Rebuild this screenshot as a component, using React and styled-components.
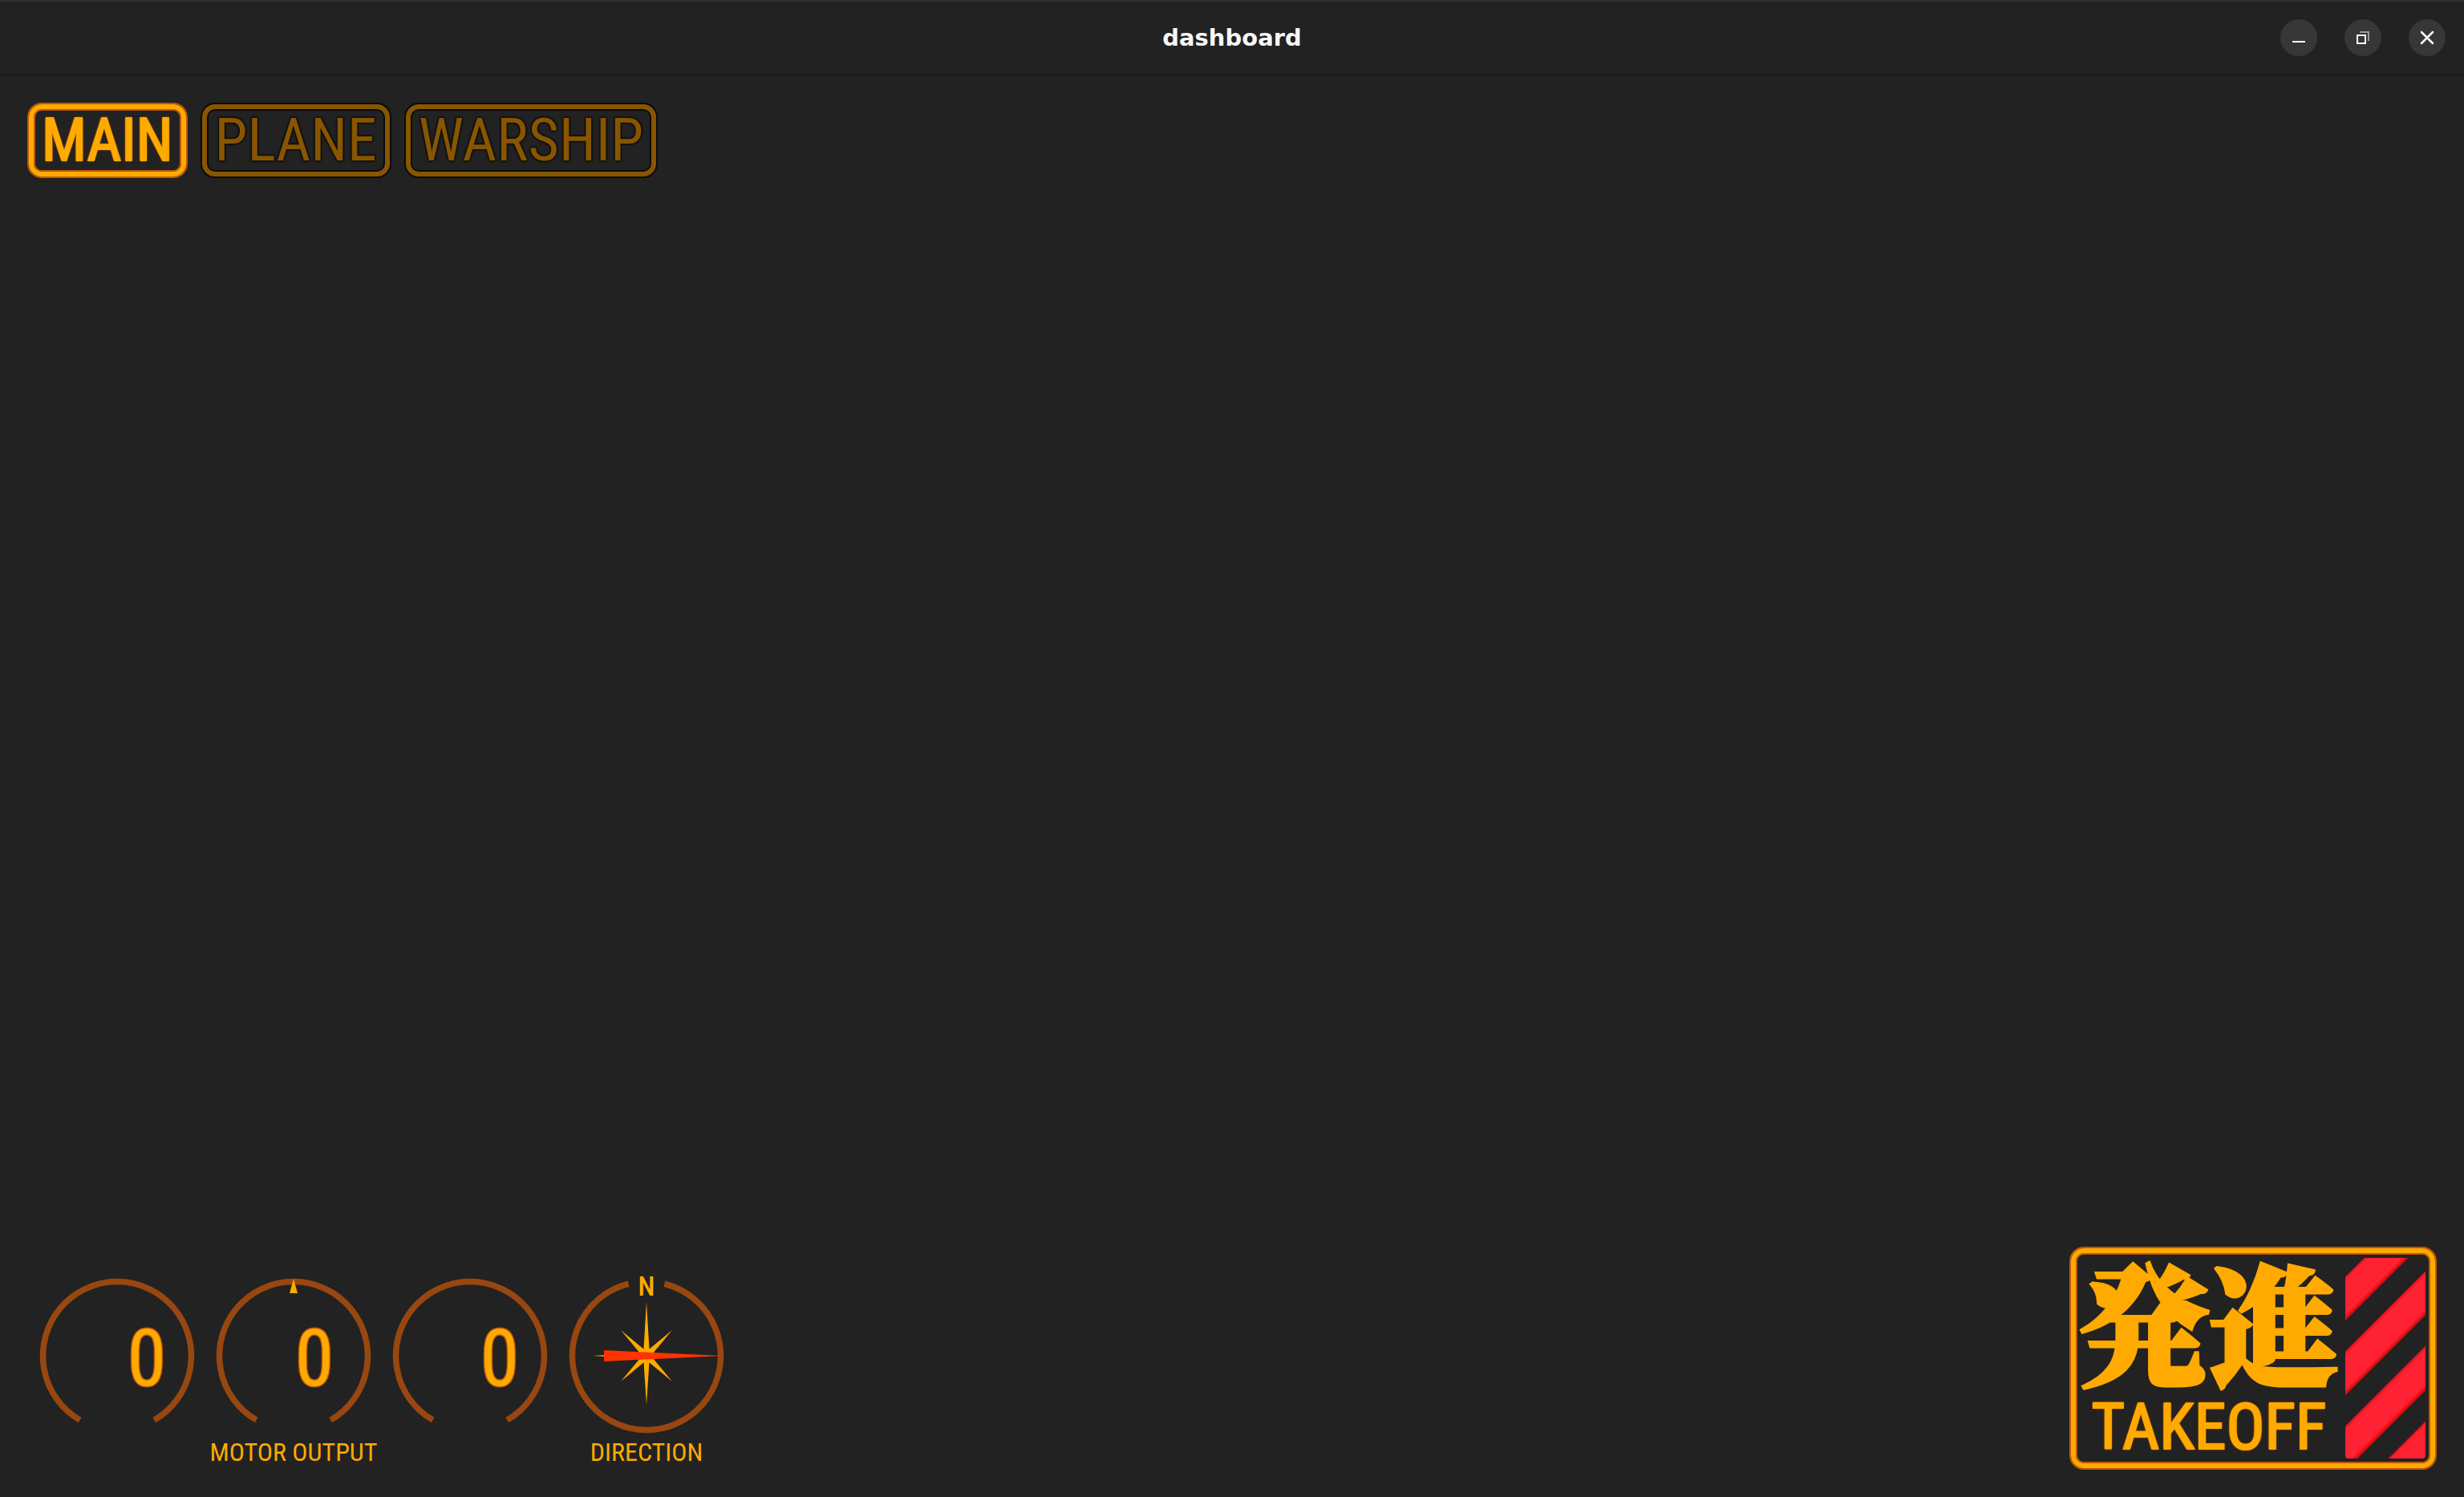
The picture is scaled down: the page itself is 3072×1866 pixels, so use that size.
import React, { useState } from 'react';
import styled, { createGlobalStyle, css } from 'styled-components';

const amber = '#ffaa00';
const glow = '#bf560b';
const ring = '#984710';

const GlobalStyle = createGlobalStyle`
  * { box-sizing: border-box; }
  html, body { margin: 0; background: #222222; }
  body { font-family: "Roboto Condensed", "Roboto", "Noto Sans CJK JP", sans-serif; }
  button { margin: 0; padding: 0; border: 0; background: none; font: inherit; cursor: pointer; }
`;

const Window = styled.div`
  display: flex;
  flex-direction: column;
  min-height: 100vh;
  background: #222222;
`;

const TitleBar = styled.header`
  display: grid;
  grid-template-columns: 1fr auto 1fr;
  align-items: center;
  height: 94px;
  padding: 0 23px;
  border-top: 2px solid #303030;
  border-bottom: 2px solid #191919;
`;

const Title = styled.h1`
  grid-column: 2;
  margin: 0;
  color: #f7f7f7;
  font: bold 29px/40px "DejaVu Sans", sans-serif;
`;

const WindowControls = styled.div`
  display: flex;
  justify-content: flex-end;
  gap: 34px;
`;

const ControlButton = styled.button`
  width: 46px;
  height: 46px;
  border-radius: 50%;
  background: #373737;
  svg { display: block; }
`;

const Body = styled.main`
  display: flex;
  flex: 1;
  flex-direction: column;
  justify-content: space-between;
  padding: 36px;
`;

const Tabs = styled.nav`
  display: flex;
  gap: 20px;
`;

const outlined = css`
  border: 6px solid ${(p) => p.$color};
  border-radius: 16px;
  box-shadow: 0 0 0 2px ${(p) => p.$edge}, inset 0 0 0 2px ${(p) => p.$edge};
  color: ${(p) => p.$color};
  text-shadow: 0 0 2px ${(p) => p.$edge}, 0 0 2px ${(p) => p.$edge},
    0 0 3px ${(p) => p.$edge}, 0 0 3px ${(p) => p.$edge};
`;

const Tab = styled.button`
  && {
    ${outlined}
    height: 90px;
    padding: 0 10px;
    font-size: 74px;
    line-height: 78px;
    -webkit-text-stroke: ${(p) => (p.$active ? '2px' : '0')} ${(p) => p.$color};
  }
`;

const Footer = styled.footer`
  display: flex;
  align-items: flex-end;
  justify-content: space-between;
`;

const Instruments = styled.div`
  display: flex;
  gap: 20px;
  padding-left: 10px;
`;

const Instrument = styled.figure`
  margin: 0;
`;

const Dials = styled.div`
  display: flex;
  gap: 20px;
`;

const Dial = styled.svg`
  display: block;
  width: 200px;
  height: 200px;
  overflow: visible;
`;

const Caption = styled.figcaption`
  color: ${amber};
  font-size: 32px;
  line-height: 40px;
  text-align: center;
`;

const Reading = styled.text`
  fill: ${amber};
  font-size: 98px;
  font-weight: 400;
  text-anchor: middle;
  paint-order: stroke;
  stroke: ${glow};
  stroke-width: 3px;
`;

const North = styled.text`
  fill: ${amber};
  font-size: 34px;
  font-weight: 500;
  text-anchor: middle;
`;

const LaunchButton = styled.button`
  && {
    ${outlined}
    display: flex;
    gap: 4px;
    width: 454px;
    padding: 6px 6px 6px 0;
  }
`;

const LaunchText = styled.span`
  display: flex;
  flex: 1;
  flex-direction: column;
  align-items: center;
`;

const Kanji = styled.span`
  font-family: "Noto Serif CJK JP", "Noto Sans CJK JP", sans-serif;
  font-size: 162px;
  font-weight: 900;
  line-height: 154px;
  -webkit-text-stroke: 5px ${amber};
`;

const Latin = styled.span`
  margin-top: 18px;
  font-size: 80px;
  line-height: 78px;
  -webkit-text-stroke: 2px ${amber};
`;

const Hazard = styled.span`
  width: 100px;
  border-radius: 0 0 4px 4px;
  background: repeating-linear-gradient(
    -45deg,
    #ff2233 0 29px,
    #dd1018 33px,
    transparent 33px 60px,
    #cc0505 60px,
    #ff2233 66px
  );
`;

function point(radius, degrees) {
  const a = (degrees * Math.PI) / 180;
  return `${100 + radius * Math.sin(a)} ${100 - radius * Math.cos(a)}`;
}

function Arc({ from, to }) {
  return (
    <path
      d={`M${point(92.5, from)} A92.5 92.5 0 1 1 ${point(92.5, to)}`}
      fill="none"
      stroke={ring}
      strokeWidth="7.5"
    />
  );
}

function MotorDial({ value, x, marker }) {
  return (
    <Dial viewBox="0 0 200 200">
      <Arc from={-150} to={150} />
      {marker && <path d="M100 4 L105 22 H95 Z" fill={amber} />}
      <Reading x={x} y="137">{value}</Reading>
    </Dial>
  );
}

function Compass() {
  return (
    <Dial viewBox="0 0 200 200">
      <Arc from={14} to={346} />
      <North x="100" y="25">N</North>
      <g fill={amber}>
        <path d="M100 33 L104 100 L100 161 L96 100 Z" />
        <path d="M33 100 L100 96 L161 100 L100 104 Z" />
        <path d="M68 68 L103 97 L132 132 L97 103 Z" />
        <path d="M132 68 L103 103 L68 132 L97 97 Z" />
      </g>
      <path d="M47 93 L196 100 L47 107 Z" fill="#ff3300" />
    </Dial>
  );
}

const pages = ['MAIN', 'PLANE', 'WARSHIP'];

export default function App() {
  const [page, setPage] = useState('MAIN');
  return (
    <>
      <GlobalStyle />
      <Window>
        <TitleBar>
          <Title>dashboard</Title>
          <WindowControls>
            <ControlButton aria-label="Minimize">
              <svg width="46" height="46">
                <path d="M15 28 H31" stroke="#fff" strokeWidth="2" />
              </svg>
            </ControlButton>
            <ControlButton aria-label="Restore">
              <svg width="46" height="46" fill="none" strokeWidth="2">
                <path d="M19 16 H30 V27" stroke="#9b9b9b" />
                <rect x="16" y="20" width="10" height="10" stroke="#fff" />
              </svg>
            </ControlButton>
            <ControlButton aria-label="Close">
              <svg width="46" height="46">
                <path d="M16 16 L30 30 M30 16 L16 30" stroke="#fff" strokeWidth="2.5" strokeLinecap="round" />
              </svg>
            </ControlButton>
          </WindowControls>
        </TitleBar>
        <Body>
          <Tabs>
            {pages.map((name) => (
              <Tab
                key={name}
                $active={name === page}
                $color={name === page ? amber : '#885500'}
                $edge={name === page ? glow : '#0b0b0b'}
                aria-pressed={name === page}
                onClick={() => setPage(name)}
              >
                {name}
              </Tab>
            ))}
          </Tabs>
          <Footer>
            <Instruments>
              <Instrument>
                <Dials>
                  <MotorDial value={0} x={137} />
                  <MotorDial value={0} x={126} marker />
                  <MotorDial value={0} x={137} />
                </Dials>
                <Caption>MOTOR OUTPUT</Caption>
              </Instrument>
              <Instrument>
                <Compass />
                <Caption>DIRECTION</Caption>
              </Instrument>
            </Instruments>
            <LaunchButton $color={amber} $edge={glow}>
              <LaunchText>
                <Kanji lang="ja">発進</Kanji>
                <Latin>TAKEOFF</Latin>
              </LaunchText>
              <Hazard />
            </LaunchButton>
          </Footer>
        </Body>
      </Window>
    </>
  );
}
